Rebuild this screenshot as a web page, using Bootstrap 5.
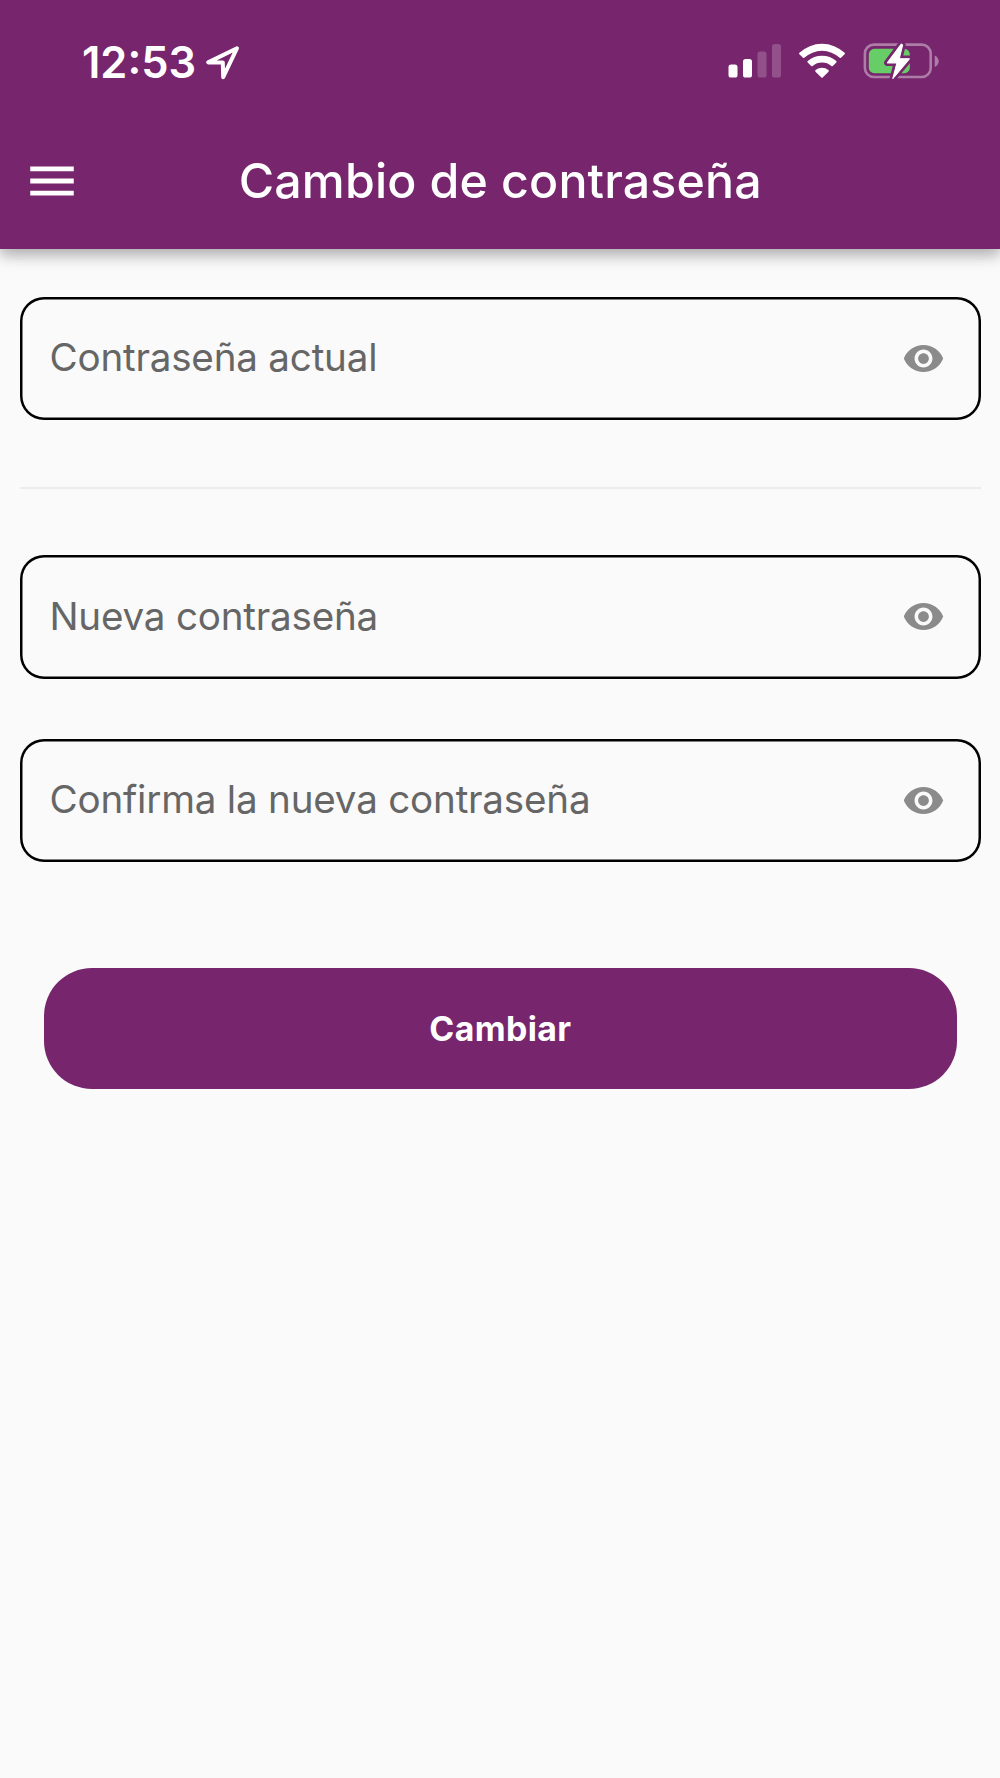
<!DOCTYPE html>
<html lang="es">
<head>
<meta charset="utf-8">
<meta name="viewport" content="width=device-width, initial-scale=1">
<title>Cambio de contraseña</title>
<link rel="stylesheet" href="https://cdn.jsdelivr.net/npm/bootstrap@5.3.0/dist/css/bootstrap.min.css">
<style>
  :root { --brand: #77256d; }
  body { background: #fafafa; font-family: Inter, "Liberation Sans", sans-serif; min-height: 1778px; }
  svg { display: block; flex: none; }
  .app-header { background: linear-gradient(var(--brand), var(--brand)); height: 248.7px; box-shadow: 0 5px 12px rgba(0,0,0,.16), 0 9px 14px rgba(0,0,0,.1), 0 2px 20px rgba(0,0,0,.1); }
  .status-bar { height: 114px; padding: 8px 61px 0 82px; }
  .clock { font-size: 43.4px; font-weight: 600; line-height: 1; letter-spacing: 0; width: 123px; padding-top: 3px; }
  .toolbar { height: 134.7px; padding: 0 22px 0 22.5px; }
  .toolbar-side { width: 58px; }
  .toolbar-title { font-size: 48.3px; font-weight: 500; line-height: 1; letter-spacing: .14px; }
  .form-area { padding: 48px 19.5px 0 20px; }
  .pass-field { height: 123.5px; box-shadow: inset 0 0 0 2.5px #000; border-radius: 24px; padding: 0 35.5px 0 29.5px; }
  .pass-field .form-control { font-size: 38.6px; line-height: 1.2; color: #666; letter-spacing: -.2px; margin-top: -2px; }
  .pass-field .form-control::placeholder { color: #666; opacity: 1; }
  .rule { height: 2px; background: #ececec; margin: 66.5px 0 66.5px; }
  .pass-gap { margin-top: 60px; }
  .btn-brand { background: var(--brand); color: #fff; height: 121px; border: 0; border-radius: 48px; font-size: 33.8px; font-weight: 700; letter-spacing: .4px; margin: 106.3px 24px 0 24.3px; }
  .btn-brand:hover { background: #651d5d; color: #fff; }
</style>
</head>
<body>
<svg width="0" height="0" class="position-absolute" aria-hidden="true">
  <symbol id="eye" viewBox="0 0 24 24"><path fill="#8b8b8b" d="M12 4.5C7 4.5 2.73 7.61 1 12c1.73 4.39 6 7.5 11 7.5s9.27-3.11 11-7.5c-1.73-4.39-6-7.5-11-7.5zM12 17c-2.76 0-5-2.24-5-5s2.24-5 5-5 5 2.24 5 5-2.24 5-5 5zm0-8c-1.66 0-3 1.34-3 3s1.34 3 3 3 3-1.34 3-3-1.34-3-3-3z"/></symbol>
</svg>

<header class="app-header text-white">
  <div class="status-bar d-flex align-items-center justify-content-between">
    <div class="d-flex align-items-center">
      <span class="clock">12:53</span>
      <svg class="mt-1" width="36" height="36" viewBox="0 0 36 36"><path d="M32 3.2 L3.2 17.4 H17.8 L18.2 32.2 Z" fill="none" stroke="#fff" stroke-width="4" stroke-linejoin="round"/></svg>
    </div>
    <div class="d-flex align-items-center">
      <svg width="53" height="36" viewBox="0 0 53 36">
        <g fill="#fff"><rect x=".5" y="21.5" width="9" height="13" rx="2.6"/><rect x="15" y="16" width="9" height="18.5" rx="2.6"/><g opacity=".2"><rect x="29.5" y="8.5" width="9" height="26" rx="2.6"/><rect x="44" y="1" width="9" height="33.5" rx="2.6"/></g></g>
      </svg>
      <svg class="ms-3" width="50" height="36" viewBox="0 0 50 36">
        <g fill="#fff"><path d="M2.4 11.2 Q1.7 10.5 2.4 9.8 A33 33 0 0 1 47.6 9.8 Q48.3 10.5 47.6 11.2 L44 14.8 Q43.4 15.4 42.7 14.8 A26 26 0 0 0 7.3 14.8 Q6.6 15.4 6 14.8 Z"/><path d="M10.7 19.5 Q10 18.8 10.7 18.1 A21.5 21.5 0 0 1 39.3 18.1 Q40 18.8 39.3 19.5 L35.8 23 Q35.1 23.7 34.4 23 A14.5 14.5 0 0 0 15.6 23 Q14.9 23.7 14.2 23 Z"/><path d="M25 34.8 Q24.5 34.8 24.1 34.3 L18.5 28.7 Q17.7 27.8 18.6 27 A10.5 10.5 0 0 1 31.4 27 Q32.3 27.8 31.5 28.7 L25.9 34.3 Q25.5 34.8 25 34.8 Z"/></g>
      </svg>
      <svg class="ms-3" width="76" height="38" viewBox="0 0 76 38">
        <rect x="1.9" y="2.6" width="65.8" height="32.4" rx="9" fill="none" stroke="#ad7ca7" stroke-width="2.6"/>
        <path d="M71.7 13.5 Q75.7 15.5 75.7 19.2 Q75.7 23 71.7 25 Z" fill="#ad7ca7"/>
        <rect x="5.8" y="6.8" width="41" height="24.4" rx="5.5" fill="#67ce67"/>
        <path d="M38.3 2.2 L24.4 20.8 H34 L29.9 36.4 L46.3 16.8 H36.2 L39.5 3 Z" fill="#fff" stroke="#77256d" stroke-width="6.5" stroke-linejoin="round" paint-order="stroke"/>
        <path d="M38.3 2.2 L24.4 20.8 H34 L29.9 36.4 L46.3 16.8 H36.2 L39.5 3 Z" fill="#fff" stroke="#fff" stroke-width="1.2" stroke-linejoin="round"/>
      </svg>
    </div>
  </div>
  <nav class="toolbar d-flex align-items-center justify-content-between">
    <button class="toolbar-side btn p-0 border-0" type="button" aria-label="Menú"><svg width="58" height="58" viewBox="0 0 24 24"><path fill="#fff" d="M3 18h18v-2H3v2zm0-5h18v-2H3v2zm0-7v2h18V6H3z"/></svg></button>
    <h1 class="toolbar-title m-0">Cambio de contraseña</h1>
    <span class="toolbar-side"></span>
  </nav>
</header>

<main class="form-area">
  <form class="d-flex flex-column">
    <div class="pass-field d-flex align-items-center">
      <input class="form-control border-0 bg-transparent shadow-none p-0" type="password" placeholder="Contraseña actual">
      <svg width="43" height="43"><use href="#eye"/></svg>
    </div>
    <div class="rule"></div>
    <div class="pass-field d-flex align-items-center">
      <input class="form-control border-0 bg-transparent shadow-none p-0" type="password" placeholder="Nueva contraseña">
      <svg width="43" height="43"><use href="#eye"/></svg>
    </div>
    <div class="pass-field pass-gap d-flex align-items-center">
      <input class="form-control border-0 bg-transparent shadow-none p-0" type="password" placeholder="Confirma la nueva contraseña">
      <svg width="43" height="43"><use href="#eye"/></svg>
    </div>
    <button class="btn btn-brand" type="button">Cambiar</button>
  </form>
</main>
<script src="https://cdn.jsdelivr.net/npm/bootstrap@5.3.0/dist/js/bootstrap.bundle.min.js"></script>
</body>
</html>
